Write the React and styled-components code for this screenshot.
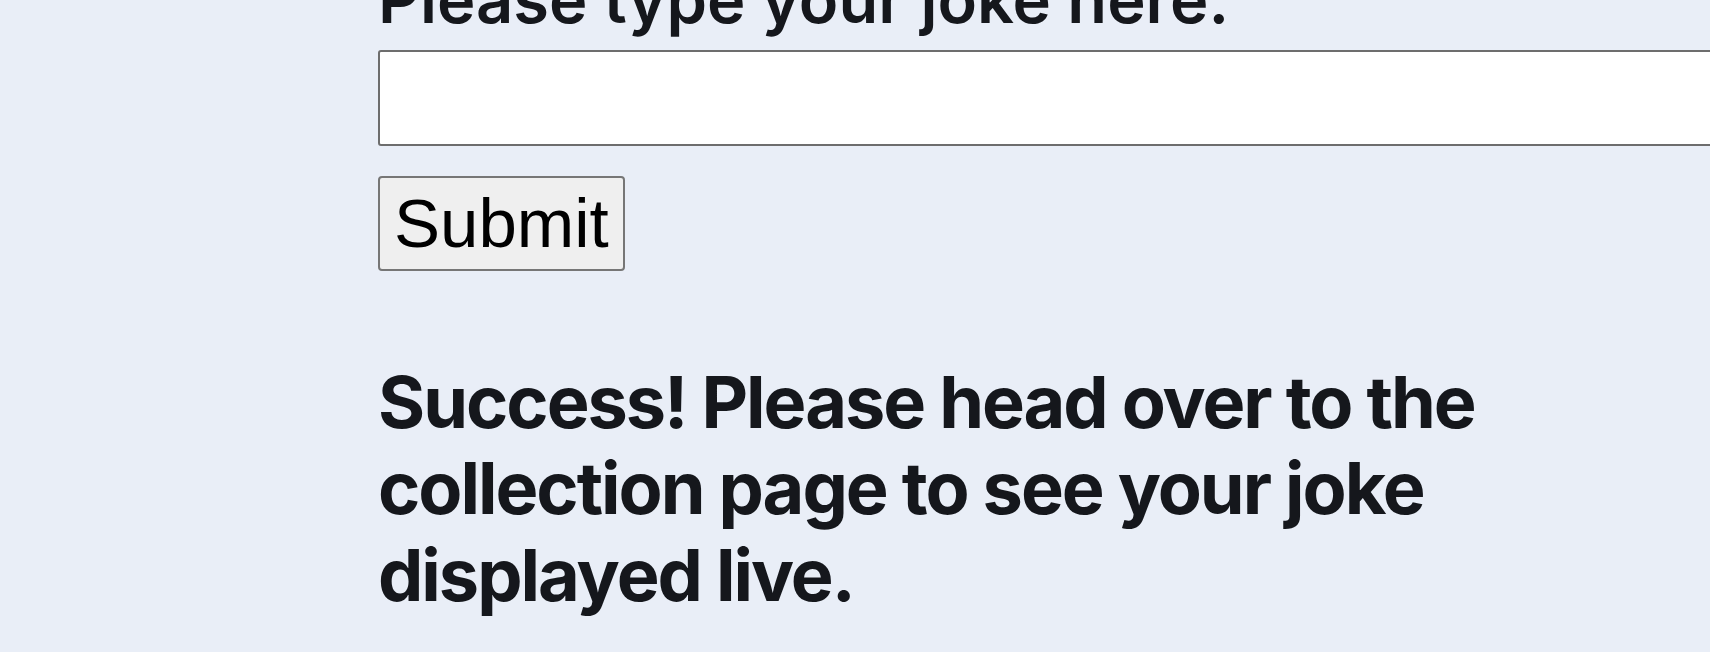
import React from "react";
import styled, { createGlobalStyle } from "styled-components";

const GlobalStyle = createGlobalStyle`
  html, body {
    margin: 0;
    padding: 0;
    background: #e9eef7;
    overflow: hidden;
  }
  body {
    font-family: Inter, "Noto Sans", sans-serif;
    color: #15171c;
  }
`;

const Page = styled.main`
  width: 1710px;
  height: 652px;
  overflow: hidden;
`;

// the screenshot is taken with the page scrolled a little, so the form
// starts above the top edge
const Form = styled.form`
  display: flex;
  flex-direction: column;
  align-items: flex-start;
  margin-top: -41px;
  padding-left: 378px;
`;

const Label = styled.label`
  font-family: Inter, sans-serif;
  font-size: 65px;
  font-weight: 600;
  line-height: 1.2;
  margin-bottom: 11px;
  margin-top: 2px;
`;

const JokeInput = styled.input`
  box-sizing: border-box;
  width: 1500px;
  height: 96px;
  background: #fff;
  border: 2px solid #6d6d6d;
  border-radius: 3px;
  font-size: 40px;
  padding: 0 16px;
`;

const SubmitButton = styled.button`
  box-sizing: border-box;
  margin-top: 30px;
  height: 95px;
  padding: 0 14px;
  background: #efefef;
  border: 2px solid #767676;
  border-radius: 4px;
  font-family: "Liberation Sans", Arial, sans-serif;
  font-size: 69px;
  color: #000;
`;

const Message = styled.h2`
  margin: 88px 0 0;
  max-width: 1200px;
  font-family: Inter, sans-serif;
  font-size: 72px;
  font-weight: 700;
  line-height: 1.2;
  letter-spacing: -0.028em;
`;

export default function App() {
  return (
    <Page>
      <GlobalStyle />
      <Form onSubmit={(e) => e.preventDefault()}>
        <Label htmlFor="joke">Please type your joke here:</Label>
        <JokeInput id="joke" type="text" />
        <SubmitButton type="submit">Submit</SubmitButton>
        <Message>
          Success! Please head over to the collection page to see your joke
          displayed live.
        </Message>
      </Form>
    </Page>
  );
}
